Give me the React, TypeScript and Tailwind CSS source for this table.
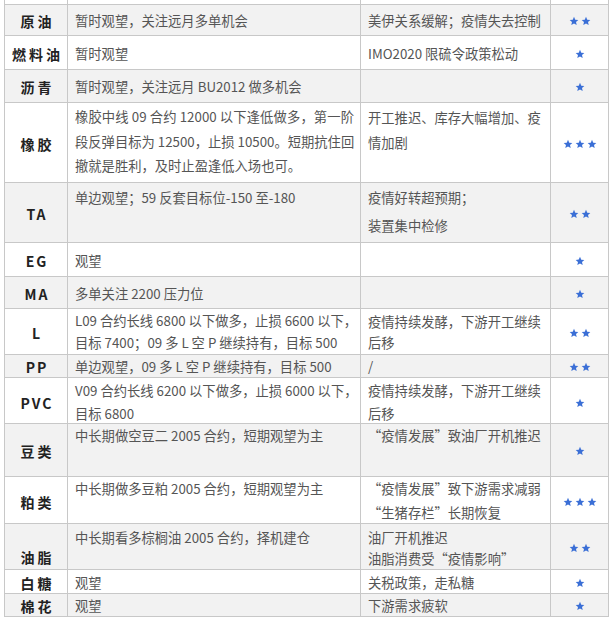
import React from 'react';

type Line = { t: string; j?: boolean };
type Cell = { lines: Line[]; cls?: string };
type Row = {
  h: string;
  grey: boolean;
  name: string;
  nameCls?: string;
  strat: Cell;
  reason: Cell;
  stars: number;
};

const one = (t: string): Cell => ({ lines: t ? [{ t }] : [] });

const rows: Row[] = [
  { h: 'h-[31px]', grey: true, name: '原油', strat: one('暂时观望，关注远月多单机会'), reason: one('美伊关系缓解；疫情失去控制'), stars: 2 },
  { h: 'h-[34px]', grey: false, name: '燃料油', strat: one('暂时观望'), reason: one('IMO2020 限硫令政策松动'), stars: 1 },
  { h: 'h-[33px]', grey: true, name: '沥青', strat: one('暂时观望，关注远月 BU2012 做多机会'), reason: one(''), stars: 1 },
  {
    h: 'h-[80px]',
    grey: false,
    name: '橡胶',
    strat: {
      cls: 'justify-start pt-[2px] leading-[24.5px]',
      lines: [
        { t: '橡胶中线 09 合约 12000 以下逢低做多，第一阶', j: true },
        { t: '段反弹目标为 12500，止损 10500。短期抗住回', j: true },
        { t: '撤就是胜利，及时止盈逢低入场也可。' },
      ],
    },
    reason: {
      cls: 'justify-start pt-[2px] leading-[25px]',
      lines: [{ t: '开工推迟、库存大幅增加、疫' }, { t: '情加剧' }],
    },
    stars: 3,
  },
  {
    h: 'h-[60px]',
    grey: true,
    name: 'TA',
    strat: { cls: 'justify-start pt-[3px] leading-[24px]', lines: [{ t: '单边观望；59 反套目标位-150 至-180' }] },
    reason: { cls: 'justify-start pt-[1px] leading-[28px]', lines: [{ t: '疫情好转超预期；' }, { t: '装置集中检修' }] },
    stars: 2,
  },
  { h: 'h-[34px]', grey: false, name: 'EG', strat: one('观望'), reason: one(''), stars: 1 },
  { h: 'h-[32px]', grey: true, name: 'MA', strat: one('多单关注 2200 压力位'), reason: one(''), stars: 1 },
  {
    h: 'h-[46px]',
    grey: false,
    name: 'L',
    strat: {
      cls: 'justify-start pt-[1px] leading-[21.5px]',
      lines: [{ t: 'L09 合约长线 6800 以下做多，止损 6600 以下，', j: true }, { t: '目标 7400；09 多 L 空 P 继续持有，目标 500' }],
    },
    reason: { cls: 'justify-start pt-[2px] leading-[21px]', lines: [{ t: '疫情持续发酵，下游开工继续' }, { t: '后移' }] },
    stars: 2,
  },
  { h: 'h-[23px]', grey: true, name: 'PP', strat: one('单边观望，09 多 L 空 P 继续持有，目标 500'), reason: one('/'), stars: 2 },
  {
    h: 'h-[46px]',
    grey: false,
    name: 'PVC',
    strat: {
      cls: 'justify-start pt-[1px] leading-[23px]',
      lines: [{ t: 'V09 合约长线 6200 以下做多，止损 6000 以下，', j: true }, { t: '目标 6800' }],
    },
    reason: { cls: 'justify-start pt-[1px] leading-[23px]', lines: [{ t: '疫情持续发酵，下游开工继续' }, { t: '后移' }] },
    stars: 1,
  },
  {
    h: 'h-[53px]',
    grey: true,
    name: '豆类',
    strat: { cls: 'justify-start pt-0 leading-[24px]', lines: [{ t: '中长期做空豆二 2005 合约，短期观望为主' }] },
    reason: { cls: 'justify-start pt-0 leading-[24px]', lines: [{ t: '“疫情发展”致油厂开机推迟' }] },
    stars: 1,
  },
  {
    h: 'h-[47px]',
    grey: false,
    name: '粕类',
    strat: { cls: 'justify-start pt-0 leading-[24px]', lines: [{ t: '中长期做多豆粕 2005 合约，短期观望为主' }] },
    reason: { cls: 'justify-start pt-0 leading-[24px]', lines: [{ t: '“疫情发展”致下游需求减弱' }, { t: '“生猪存栏”长期恢复' }] },
    stars: 3,
  },
  {
    h: 'h-[46px]',
    grey: true,
    name: '油脂',
    nameCls: 'justify-start pt-[23px]',
    strat: { cls: 'justify-start pt-[3px] leading-[21px]', lines: [{ t: '中长期看多棕榈油 2005 合约，择机建仓' }] },
    reason: { cls: 'justify-start pt-[3px] leading-[21px]', lines: [{ t: '油厂开机推迟' }, { t: '油脂消费受“疫情影响”' }] },
    stars: 2,
  },
  { h: 'h-[24px]', grey: false, name: '白糖', strat: one('观望'), reason: one('关税政策，走私糖'), stars: 1 },
  { h: 'h-[23px]', grey: true, name: '棉花', strat: one('观望'), reason: one('下游需求疲软'), stars: 1 },
];

const Star = () => (
  <svg width="10" height="10" viewBox="0 0 24 24" className="fill-[#3b6fd6]">
    <path d="M12 1.8l3 6.9 7.4.7-5.6 4.9 1.7 7.3L12 17.8l-6.5 3.8 1.7-7.3-5.6-4.9 7.4-.7z" />
  </svg>
);

const TextCell = ({ cell, wide }: { cell: Cell; wide?: boolean }) => (
  <div
    className={`flex flex-col border-r border-[#c8c8c8] ${wide ? 'pl-[7px] pr-[6px]' : 'pl-[7px] pr-[8px]'} ${
      cell.cls ?? 'justify-center pt-[2px] leading-[20px]'
    }`}
  >
    {cell.lines.map((l, i) => (
      <div key={i} className={`whitespace-nowrap ${l.j ? 'text-justify [text-align-last:justify]' : ''}`}>
        {l.t}
      </div>
    ))}
  </div>
);

export default function App() {
  return (
    <div className="h-[620px] w-[612px] overflow-hidden bg-white font-['Noto_Sans_CJK_SC','Noto_Sans',sans-serif] text-[13.3px] text-[#555]">
      <div className="ml-[4px] w-[605px] border-l border-[#c8c8c8]">
        {/* tail of the row above */}
        <div className="grid h-[5px] grid-cols-[63px_293px_190px_58px] border-b border-[#c8c8c8]">
          <div className="border-r border-[#c8c8c8]" />
          <div className="border-r border-[#c8c8c8]" />
          <div className="border-r border-[#c8c8c8]" />
          <div className="border-r border-[#c8c8c8]" />
        </div>

        {rows.map((r) => {
          const latin = /^[A-Z]+$/.test(r.name);
          return (
            <div
              key={r.name}
              className={`grid grid-cols-[63px_293px_190px_58px] border-b border-[#c8c8c8] ${r.h} ${
                r.grey ? 'bg-[#f2f2f2]' : 'bg-white'
              }`}
            >
              <div
                className={`flex flex-col items-center border-r border-[#c8c8c8] text-[14px] font-bold leading-[20px] text-[#222] ${
                  latin ? 'pl-[2px] tracking-[2px]' : 'pl-[3px] tracking-[3px]'
                } ${r.nameCls ?? 'justify-center pt-[2px]'}`}
              >
                {r.name}
              </div>
              <TextCell cell={r.strat} wide />
              <TextCell cell={r.reason} />
              <div className="flex items-center justify-center gap-[2px] border-r border-[#c8c8c8] pt-[2px]">
                {Array.from({ length: r.stars }).map((_, i) => (
                  <Star key={i} />
                ))}
              </div>
            </div>
          );
        })}
      </div>
    </div>
  );
}
